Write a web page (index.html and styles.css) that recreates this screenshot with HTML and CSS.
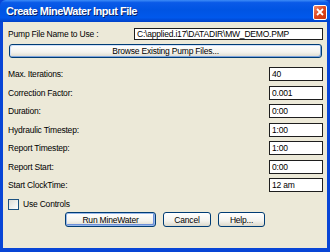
FILE: index.html
```html
<!DOCTYPE html>
<html lang="en">
<head>
    <meta charset="UTF-8">
    <title>Create MineWater Input File</title>
    <link rel="stylesheet" href="styles.css">
</head>
<body>
    <div class="window">
        <div class="titlebar">
            <span class="title">Create MineWater Input File</span>
            <span class="close">
                <svg width="8" height="8" viewBox="0 0 8 8"><path d="M1 1 L7 7 M7 1 L1 7" stroke="#fff" stroke-width="1.8"/></svg>
            </span>
        </div>
        <div class="content">
            <div class="file-row">
                <span class="label">Pump File Name to Use :</span>
                <div class="textbox file-box">C:\applied.i17\DATADIR\MW_DEMO.PMP</div>
            </div>
            <div class="btn browse">Browse Existing Pump Files...</div>

            <div class="fields">
                <div class="field"><span class="label">Max. Iterations:</span><div class="textbox">40</div></div>
                <div class="field"><span class="label">Correction Factor:</span><div class="textbox">0.001</div></div>
                <div class="field"><span class="label">Duration:</span><div class="textbox">0:00</div></div>
                <div class="field"><span class="label">Hydraulic Timestep:</span><div class="textbox">1:00</div></div>
                <div class="field"><span class="label">Report Timestep:</span><div class="textbox">1:00</div></div>
                <div class="field"><span class="label">Report Start:</span><div class="textbox">0:00</div></div>
                <div class="field"><span class="label">Start ClockTime:</span><div class="textbox">12 am</div></div>
            </div>

            <div class="check"><span class="box"></span><span class="label">Use Controls</span></div>

            <div class="actions">
                <div class="btn default run">Run MineWater</div>
                <div class="btn cancel">Cancel</div>
                <div class="btn help">Help...</div>
            </div>
        </div>
    </div>
</body>
</html>
```

FILE: styles.css
```css
html, body {
    margin: 0;
    padding: 0;
}

body {
    font-family: "Liberation Sans", Arial, sans-serif;
    font-size: 8.5px;
    letter-spacing: -0.2px;
    color: #000;
}

.window {
    width: 330px;
    height: 252px;
    display: flex;
    flex-direction: column;
    background: #0845d6;
}

.titlebar {
    height: 22px;
    display: flex;
    align-items: center;
    justify-content: space-between;
    padding: 0 3px 0 6px;
    background: linear-gradient(#3d8cf7 0%, #0a5ae8 12%, #0054e3 45%, #0058ec 80%, #0041c8 100%);
    border-radius: 6px 6px 0 0;
}

.title {
    color: #fff;
    font-weight: bold;
    font-size: 11px;
    letter-spacing: -0.5px;
    text-shadow: 1px 1px 0 #0a246a;
}

.close {
    width: 14px;
    height: 15px;
    box-sizing: border-box;
    border: 1px solid #fff;
    border-radius: 2px;
    background: linear-gradient(135deg, #f08c6c, #e0461c 50%, #c8320c);
    display: flex;
    align-items: center;
    justify-content: center;
    margin-top: 2px;
}

.content {
    flex: 1;
    margin: 0 3px 4px 3px;
    background: #ece9d8;
    padding: 6px 4px 0 5px;
    display: flex;
    flex-direction: column;
}

.label {
    white-space: nowrap;
}

.file-row {
    display: flex;
    align-items: center;
    justify-content: space-between;
    height: 12px;
}

.textbox {
    box-sizing: border-box;
    height: 14px;
    line-height: 12px;
    padding: 0 2px;
    background: #fff;
    border: 1px solid #1e1e1e;
    white-space: nowrap;
    overflow: hidden;
}

.file-box {
    width: 189px;
    height: 12px;
    line-height: 10px;
}

.btn {
    box-sizing: border-box;
    height: 15px;
    display: flex;
    align-items: center;
    justify-content: center;
    background: linear-gradient(#ffffff, #f4f3ee 60%, #dcd9cc);
    border: 1px solid #003c74;
    border-radius: 3px;
}

.browse {
    margin: 4px 1px 0 1px;
    height: 14px;
    box-shadow: inset -1px -1px 0 #7ea4dd, inset 1px 1px 0 #cfe0fa;
}

.fields {
    display: flex;
    flex-direction: column;
    gap: 4.5px;
    margin-top: 9px;
}

.field {
    display: flex;
    align-items: center;
    justify-content: space-between;
    height: 14px;
}

.field .textbox {
    width: 54px;
}

.check {
    display: flex;
    align-items: center;
    gap: 4px;
    margin-top: 7px;
    height: 10px;
}

.box {
    width: 9px;
    height: 9px;
    border: 1px solid #1c5180;
    background: linear-gradient(135deg, #dcdcd6, #ffffff);
}

.actions {
    display: flex;
    gap: 7px;
    padding-left: 57px;
    margin-top: 3px;
}

.run {
    width: 91px;
}

.default {
    box-shadow: inset 0 0 0 1px #98b8ea, inset -1px -1px 0 1px #6c8fd8;
}

.cancel {
    width: 48px;
}

.help {
    width: 47px;
}
```
